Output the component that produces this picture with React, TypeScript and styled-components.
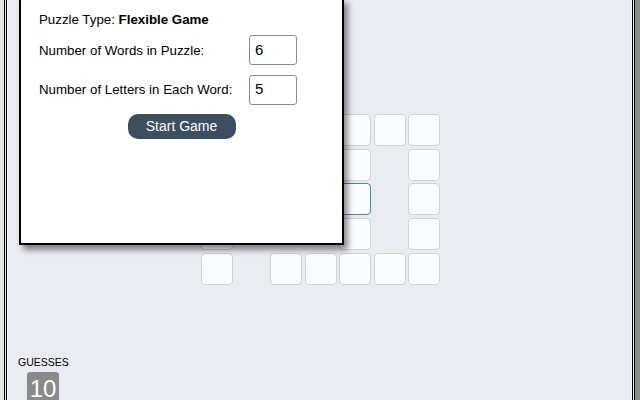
import styled, { createGlobalStyle } from "styled-components"

const GlobalStyle = createGlobalStyle`
  html, body {
    margin: 0;
    padding: 0;
    height: 100%;
    overflow: hidden;
  }
  body {
    font-family: "Liberation Sans", Arial, Helvetica, sans-serif;
    color: #000;
    background: #e2e2e2;
  }
`

const COLS = 7
const ROWS = 5

// cells that belong to a word (row, col)
const cells = new Set<string>()
for (let c = 2; c < 7; c++) {
  cells.add(`0-${c}`)
  cells.add(`4-${c}`)
}
for (let c = 0; c < 5; c++) cells.add(`2-${c}`)
for (let r = 0; r < 5; r++) {
  cells.add(`${r}-0`)
  cells.add(`${r}-4`)
  cells.add(`${r}-6`)
}
const focused = "2-4"

export default function App() {
  const grid = []
  for (let r = 0; r < ROWS; r++) {
    for (let c = 0; c < COLS; c++) {
      const key = `${r}-${c}`
      grid.push(
        cells.has(key) ? (
          <Tile key={key} $focused={key === focused} />
        ) : (
          <Blank key={key} />
        )
      )
    }
  }

  return (
    <Page>
      <GlobalStyle />
      <Gutter />
      <Frame>
        <Board>{grid}</Board>
        <Footer>
          <GuessLabel>GUESSES</GuessLabel>
          <GuessCount>10</GuessCount>
        </Footer>
        <Dialog>
          <TypeLine>
            Puzzle Type: <b>Flexible Game</b>
          </TypeLine>
          <Form>
            <Label htmlFor="words">Number of Words in Puzzle:</Label>
            <NumberInput id="words" defaultValue="6" />
            <Label htmlFor="letters">Number of Letters in Each Word:</Label>
            <NumberInput id="letters" defaultValue="5" />
          </Form>
          <StartButton>Start Game</StartButton>
        </Dialog>
      </Frame>
      <Scroll />
    </Page>
  )
}

const Page = styled.div`
  display: flex;
  width: 640px;
  height: 400px;
  overflow: hidden;
`

const Gutter = styled.div`
  width: 4px;
  background: #e6e6e6;
`

const Scroll = styled.div`
  width: 5px;
  background: #8c8c8c;
`

const Frame = styled.main`
  position: relative;
  flex: 1;
  display: flex;
  flex-direction: column;
  background: #e9edf1;
  border-left: 3px double #000;
  border-right: 3px double #000;
  box-shadow: inset 1px 0 #fff, inset -1px 0 #fff;
`

const Board = styled.div`
  display: grid;
  grid-template-columns: repeat(${COLS}, 32px);
  grid-auto-rows: 32px;
  gap: 2.67px;
  margin: 114px auto 0;
  transform: translateX(1px);
`

const Tile = styled.div<{ $focused: boolean }>`
  box-sizing: border-box;
  background: #fbfcfd;
  border: 1px solid ${({ $focused }) => ($focused ? "#5d7db8" : "#cfd2d6")};
  border-radius: 4px;
`

const Blank = styled.div``

const Footer = styled.div`
  display: flex;
  flex-direction: column;
  align-items: flex-start;
  margin-top: 71px;
  padding-left: 11px;
  gap: 4px;
`

const GuessLabel = styled.div`
  font-size: 10.5px;
  line-height: 12px;
`

const GuessCount = styled.div`
  margin-left: 9px;
  width: 32px;
  height: 32px;
  display: flex;
  align-items: center;
  justify-content: center;
  padding-top: 2px;
  box-sizing: border-box;
  background: #8a8a8a;
  color: #fff;
  font-size: 24px;
  border-radius: 3px;
`

const Dialog = styled.section`
  position: absolute;
  left: 12px;
  top: -2px;
  box-sizing: border-box;
  width: 325px;
  height: 247px;
  padding: 12px 18px 0;
  background: #fff;
  border: 2px solid #000;
  box-shadow: 4px 5px 6px rgba(0, 0, 0, 0.45);
  display: flex;
  flex-direction: column;
  font-size: 13.3px;
`

const TypeLine = styled.div`
  line-height: 15px;
`

const Form = styled.div`
  display: grid;
  grid-template-columns: 210px 48px;
  row-gap: 9.5px;
  align-items: center;
  margin-top: 8px;
`

const Label = styled.label`
  line-height: 15px;
`

const NumberInput = styled.input`
  box-sizing: border-box;
  width: 48px;
  height: 30px;
  padding: 0 0 2px 5px;
  border: 1px solid #8a8a8a;
  border-radius: 3px;
  font-family: inherit;
  font-size: 15px;
  color: #000;
  background: #fff;
  outline: none;
`

const StartButton = styled.button`
  align-self: center;
  margin-top: 9px;
  width: 108px;
  height: 25px;
  border: none;
  border-radius: 10px;
  background: #3d4e5e;
  color: #fff;
  font-family: inherit;
  font-size: 14px;
  padding: 0;
  cursor: pointer;
`
